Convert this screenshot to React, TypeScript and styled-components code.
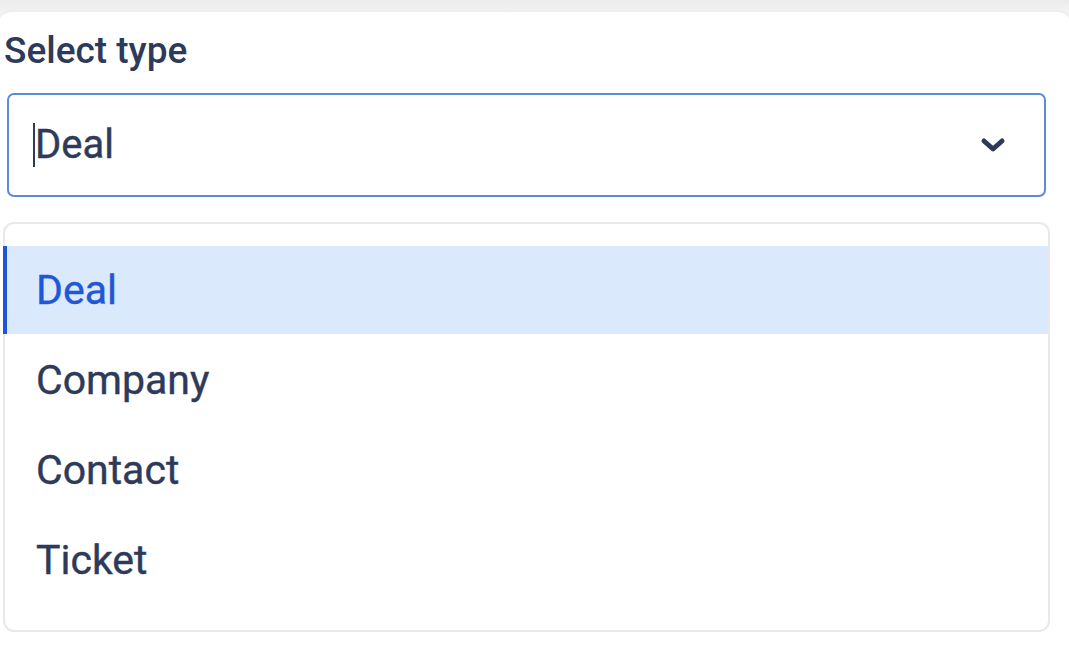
import React, { useState } from "react";
import styled, { createGlobalStyle } from "styled-components";

const GlobalStyle = createGlobalStyle`
  html, body {
    margin: 0;
    padding: 0;
    background: linear-gradient(180deg, #ebebeb 0px, #f3f3f3 12px, #ffffff 40px);
    font-family: Roboto, "Liberation Sans", Arial, sans-serif;
    overflow: hidden;
  }
`;

const Page = styled.div`
  width: 1069px;
  height: 672px;
  padding-top: 12px;
  box-sizing: border-box;
  overflow: hidden;
`;

const Card = styled.div`
  margin: 0 -2px;
  height: 100%;
  background: #ffffff;
  border-radius: 14px 14px 0 0;
  box-shadow: 0 -1px 4px rgba(0, 0, 0, 0.04);
  padding: 19px 21px 0 5px;
`;

const Label = styled.div`
  font-size: 37px;
  line-height: 40px;
  font-weight: 500;
  color: #2e3a59;
  padding-left: 1px;
  margin-bottom: 22px;
`;

const Control = styled.div`
  margin: 0 4px;
  height: 104px;
  box-sizing: border-box;
  border: 2px solid #5b8bd9;
  border-radius: 7px;
  display: flex;
  align-items: center;
  justify-content: space-between;
  padding: 0 38px 0 24px;
  cursor: pointer;
`;

const Value = styled.div`
  display: flex;
  align-items: center;
  font-size: 40px;
  line-height: 44px;
  color: #2e3a59;
  -webkit-text-stroke: 0.4px #2e3a59;
`;

const Caret = styled.span`
  display: inline-block;
  width: 2px;
  height: 44px;
  background: #2e3a59;
`;

const Menu = styled.ul`
  list-style: none;
  margin: 25px 0 0;
  padding: 22px 0 26px;
  border: 2px solid #e7e8ec;
  border-radius: 11px;
  display: flex;
  flex-direction: column;
  gap: 2px;
`;

const Option = styled.li<{ $active?: boolean }>`
  height: 88px;
  display: flex;
  align-items: center;
  margin-left: -2px;
  padding-left: 29px;
  border-left: 4px solid ${(p) => (p.$active ? "#1d55d8" : "transparent")};
  background: ${(p) => (p.$active ? "#dbe9fc" : "transparent")};
  color: ${(p) => (p.$active ? "#1f57d6" : "#2e3a59")};
  -webkit-text-stroke: 0.4px ${(p) => (p.$active ? "#1f57d6" : "#2e3a59")};
  font-size: 41px;
  line-height: 44px;
  cursor: pointer;
`;

const Chevron = () => (
  <svg width="26" height="16" viewBox="0 0 26 16" fill="none">
    <polyline
      points="4,4 13,12 22,4"
      stroke="#2e3a59"
      strokeWidth="5"
      strokeLinecap="round"
      strokeLinejoin="round"
    />
  </svg>
);

const types = ["Deal", "Company", "Contact", "Ticket"];

export default function App() {
  const [selected, setSelected] = useState("Deal");

  return (
    <>
      <GlobalStyle />
      <Page>
        <Card>
          <Label>Select type</Label>
          <Control>
            <Value>
              <Caret />
              {selected}
            </Value>
            <Chevron />
          </Control>
          <Menu>
            {types.map((t) => (
              <Option key={t} $active={t === selected} onClick={() => setSelected(t)}>
                {t}
              </Option>
            ))}
          </Menu>
        </Card>
      </Page>
    </>
  );
}
